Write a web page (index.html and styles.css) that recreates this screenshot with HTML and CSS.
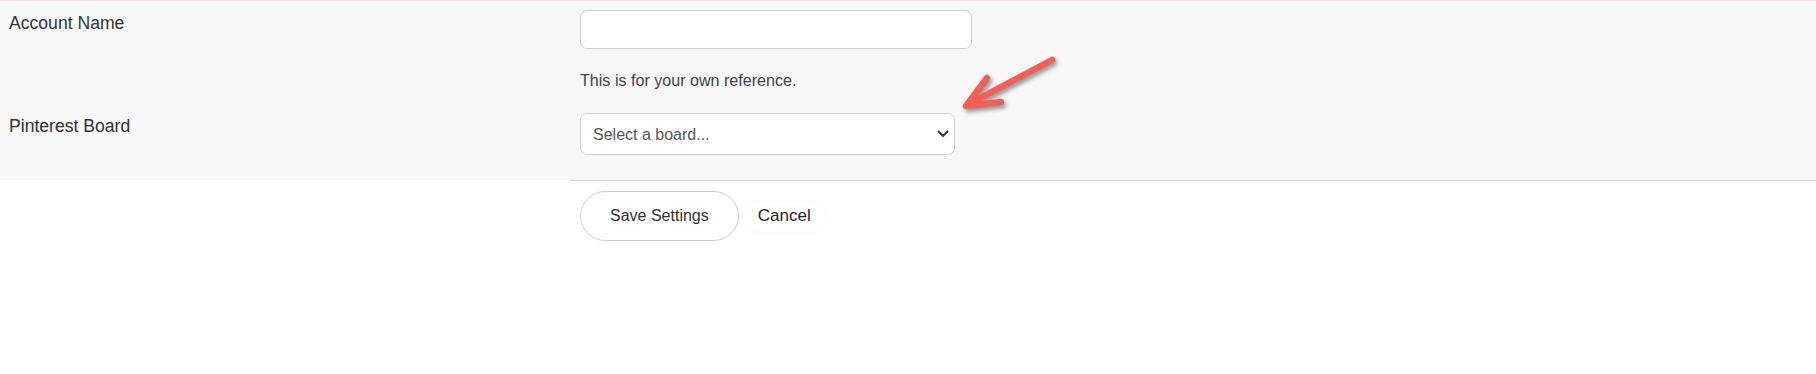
FILE: index.html
```html
<!DOCTYPE html>
<html lang="en">
<head>
    <meta charset="UTF-8">
    <meta name="viewport" content="width=device-width, initial-scale=1.0">
    <title>Pinterest Account Settings</title>
    <link rel="stylesheet" href="styles.css">
</head>
<body>

<form class="settings">
    <div class="panel">
        <div class="row row-first">
            <label class="row-label" for="accountName">Account Name</label>
            <div class="row-field">
                <input type="text" id="accountName" class="text-input" name="accountName">
                <p class="help">This is for your own reference.</p>
            </div>
        </div>
        <div class="row row-second">
            <label class="row-label" for="board">Pinterest Board</label>
            <div class="row-field">
                <div class="select-wrap">
                    <select id="board" name="board" class="board-select">
                        <option value="">Select a board...</option>
                    </select>
                    <svg class="chevron" width="12" height="8" viewBox="0 0 12 8">
                        <path d="M1.5 1.5 L6 6 L10.5 1.5" fill="none" stroke="#3a3a3a" stroke-width="2" stroke-linecap="round" stroke-linejoin="round"/>
                    </svg>
                </div>
            </div>
        </div>

        <!-- annotation arrow -->
        <svg class="pointer" width="120" height="80" viewBox="0 0 120 80">
            <g fill="none" stroke="#f45f51" stroke-width="6.5" stroke-linecap="round" stroke-linejoin="round">
                <path d="M102 10 L17 55"/>
                <path d="M37 28 L16 56 L51 52"/>
            </g>
        </svg>
    </div>

    <div class="actions">
        <button type="submit" class="btn-save">Save Settings</button>
        <button type="button" class="btn-cancel">Cancel</button>
    </div>
</form>

</body>
</html>
```

FILE: styles.css
```css
body {
    margin: 0;
    font-family: "Liberation Sans", Arial, sans-serif;
    color: #32373c;
    background-color: #ffffff;
}
.panel {
    position: relative;
    background-color: #f8f8f8;
    border-top: 1px solid #f3dde9;
}
.row {
    display: grid;
    grid-template-columns: 570px 1fr;
}
.row-first {
    padding: 9px 0 11px;
}
.row-second {
    padding: 10px 0 25px;
}
.row-label {
    display: block;
    margin-top: 1px;
    padding-left: 9px;
    font-size: 17.6px;
    line-height: 24px;
    color: #2f3438;
}
.row-field {
    padding-left: 10px;
}
.text-input {
    display: block;
    box-sizing: border-box;
    width: 392px;
    height: 39px;
    margin: 0;
    border: 1px solid #cfcfcf;
    border-radius: 7px;
    background-color: #ffffff;
}
.help {
    margin: 19px 0 0;
    font-size: 16.1px;
    line-height: 24px;
    color: #3c434a;
}
.select-wrap {
    position: relative;
    width: 375px;
}
.board-select {
    display: block;
    box-sizing: border-box;
    width: 375px;
    height: 42px;
    margin: 0;
    padding: 0 30px 0 12px;
    border: 1px solid #cfcfcf;
    border-radius: 7px;
    background-color: #ffffff;
    font-family: "Liberation Sans", Arial, sans-serif;
    font-size: 16px;
    color: #50575e;
    appearance: none;
    -webkit-appearance: none;
}
.chevron {
    position: absolute;
    right: 6px;
    top: 17px;
    pointer-events: none;
}
.pointer {
    position: absolute;
    left: 950px;
    top: 49px;
    filter: drop-shadow(2px 3px 2px rgba(0, 0, 0, 0.4));
}
.actions {
    display: flex;
    align-items: center;
    gap: 4px;
    margin-left: 570px;
    padding: 10px;
    border-top: 1px solid #d3d8e0;
}
.btn-save {
    height: 50px;
    padding: 0 29px;
    border: 1px solid #cccccc;
    border-radius: 25px;
    background-color: #ffffff;
    font-family: "Liberation Sans", Arial, sans-serif;
    font-size: 16px;
    color: #2c3338;
    cursor: pointer;
}
.btn-cancel {
    height: 31px;
    padding: 0 15px;
    border: none;
    border-radius: 16px;
    background-color: #ffffff;
    box-shadow: 0 0 2px rgba(0, 0, 0, 0.08);
    font-family: "Liberation Sans", Arial, sans-serif;
    font-size: 17px;
    color: #1d2327;
    cursor: pointer;
}
```
